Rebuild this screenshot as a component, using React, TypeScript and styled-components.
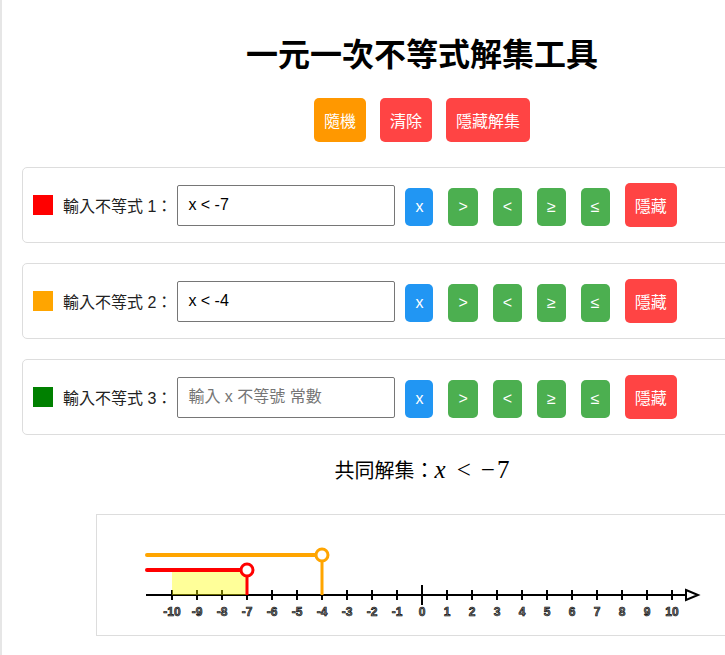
import React from "react";
import styled, { createGlobalStyle } from "styled-components";

const GlobalStyle = createGlobalStyle`
  html, body { margin: 0; padding: 0; }
  body {
    background: #e6e6e6;
    font-family: "Liberation Sans", Arial, "Noto Sans CJK TC", sans-serif;
  }
`;

const Container = styled.div`
  margin-left: 2px;
  width: 800px;
  padding: 8px 20px 20px;
  background: #fff;
`;

const Title = styled.h1`
  margin: 21px 0 23px;
  text-align: center;
  font-size: 32px;
  font-weight: bold;
  color: #000;
`;

const Controls = styled.div`
  display: flex;
  justify-content: center;
  gap: 14px;
  margin-bottom: 25px;
`;

const Btn = styled.button<{ $bg: string }>`
  background: ${(p) => p.$bg};
  color: #fff;
  border: none;
  border-radius: 5px;
  padding: 10px;
  font-size: 16px;
  font-family: inherit;
  cursor: pointer;
`;

const OpBtn = styled(Btn)`
  margin-right: 15px;
`;

const Card = styled.div`
  display: flex;
  align-items: baseline;
  border: 1px solid #ddd;
  border-radius: 5px;
  padding: 15px 10px;
  margin-bottom: 20px;
`;

const Swatch = styled.span<{ $color: string }>`
  align-self: center;
  width: 20px;
  height: 20px;
  margin-right: 10px;
  background: ${(p) => p.$color};
`;

const Label = styled.label`
  font-size: 16px;
  color: #222;
  margin-right: 5px;
`;

const Field = styled.input`
  box-sizing: border-box;
  align-self: center;
  width: 218px;
  height: 41px;
  padding: 0 10px;
  font-size: 16px;
  font-family: inherit;
  color: #000;
  border: 1px solid #767676;
  border-radius: 2px;
  margin-right: 10px;
  &::placeholder {
    color: #757575;
  }
`;

const Result = styled.div`
  text-align: center;
  font-size: 20px;
  color: #000;
  margin: 1px 0 30px;
`;

const MathExpr = styled.span`
  font-family: "Liberation Serif", "DejaVu Serif", serif;
  font-size: 25px;
`;

const MathVar = styled.i`
  font-style: italic;
`;

const MathRel = styled.span`
  margin: 0 10px 0 11px;
`;

const MathMinus = styled.span`
  margin-right: 2px;
`;

const NumberLineSvg = styled.svg`
  display: block;
  margin: 0 auto;
  border: 1px solid #ddd;
`;

type Row = { color: string; value: string };

const rows: Row[] = [
  { color: "#ff0000", value: "x < -7" },
  { color: "#ffa500", value: "x < -4" },
  { color: "#008000", value: "" },
];

const ops = [">", "<", "≥", "≤"];

const X0 = 325;
const STEP = 25;
const px = (v: number) => X0 + STEP * v;

function NumberLine() {
  const ticks = [];
  for (let v = -10; v <= 10; v++) ticks.push(v);
  return (
    <NumberLineSvg width={650} height={120} viewBox="0 0 650 120">
      <line x1={49} y1={80} x2={590} y2={80} stroke="#000" strokeWidth={2} />
      <polygon points="589,75 601,80 589,85" fill="#fff" stroke="#000" strokeWidth={2} />
      {ticks.map((v) => (
        <line
          key={`t${v}`}
          x1={px(v)}
          x2={px(v)}
          y1={v === 0 ? 70 : 75}
          y2={v === 0 ? 90 : 85}
          stroke="#000"
          strokeWidth={2}
        />
      ))}
      {ticks.map((v) => (
        <text
          key={`l${v}`}
          x={px(v)}
          y={101}
          textAnchor="middle"
          fontFamily="Liberation Sans, Arial, sans-serif"
          fontWeight="bold"
          fontSize={12}
          fill="#777"
          stroke="#000"
          strokeWidth={0.6}
        >
          {v}
        </text>
      ))}
      <rect x={75} y={55} width={75} height={25} fill="rgba(255,255,0,0.4)" />
      <line x1={50} y1={40} x2={225} y2={40} stroke="#ffa500" strokeWidth={4} strokeLinecap="round" />
      <line x1={225} y1={40} x2={225} y2={80} stroke="#ffa500" strokeWidth={3} />
      <circle cx={225} cy={40} r={6} fill="#fff" stroke="#ffa500" strokeWidth={3} />
      <line x1={50} y1={55} x2={150} y2={55} stroke="#ff0000" strokeWidth={4} strokeLinecap="round" />
      <line x1={150} y1={55} x2={150} y2={80} stroke="#ff0000" strokeWidth={3} />
      <circle cx={150} cy={55} r={6} fill="#fff" stroke="#ff0000" strokeWidth={3} />
    </NumberLineSvg>
  );
}

export default function App() {
  return (
    <>
      <GlobalStyle />
      <Container>
        <Title>一元一次不等式解集工具</Title>
        <Controls>
          <Btn $bg="#ff9800">隨機</Btn>
          <Btn $bg="#ff4444">清除</Btn>
          <Btn $bg="#ff4444">隱藏解集</Btn>
        </Controls>
        {rows.map((r, i) => (
          <Card key={i}>
            <Swatch $color={r.color} />
            <Label>輸入不等式 {i + 1}：</Label>
            <Field defaultValue={r.value} placeholder="輸入 x 不等號 常數" />
            <OpBtn $bg="#2196f3">x</OpBtn>
            {ops.map((o) => (
              <OpBtn key={o} $bg="#4caf50">
                {o}
              </OpBtn>
            ))}
            <Btn $bg="#ff4444">隱藏</Btn>
          </Card>
        ))}
        <Result>
          共同解集：
          <MathExpr>
            <MathVar>x</MathVar>
            <MathRel>&lt;</MathRel>
            <MathMinus>−</MathMinus>7
          </MathExpr>
        </Result>
        <NumberLine />
      </Container>
    </>
  );
}
